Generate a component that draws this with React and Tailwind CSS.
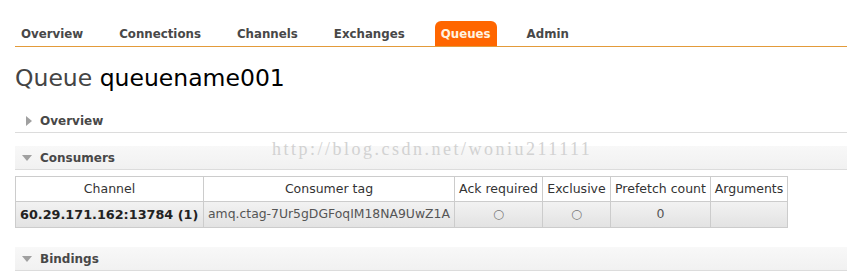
const tabs = ['Overview', 'Connections', 'Channels', 'Exchanges', 'Queues', 'Admin'];

const columns = [
  { label: 'Channel', width: 'w-[188px]' },
  { label: 'Consumer tag', width: 'w-[251px]' },
  { label: 'Ack required', width: 'w-[88px]' },
  { label: 'Exclusive', width: 'w-[68px]' },
  { label: 'Prefetch count', width: 'w-[100px]' },
  { label: 'Arguments', width: 'w-[77px]' },
];

function SectionHeader({ title, open, shaded }) {
  return (
    <div
      className={`flex items-center h-[24px] border-b border-[#dcdcdc] ${
        shaded ? 'bg-gradient-to-b from-[#f8f8f8] to-[#f1f1f1]' : ''
      }`}
    >
      <span className="w-[25px] flex justify-end pr-[8px]">
        {open ? (
          <span className="block w-0 h-0 border-l-[5px] border-r-[5px] border-t-[6px] border-l-transparent border-r-transparent border-t-[#a0a0a0]" />
        ) : (
          <span className="block w-0 h-0 border-t-[5px] border-b-[5px] border-l-[6px] border-t-transparent border-b-transparent border-l-[#a0a0a0]" />
        )}
      </span>
      <span className="font-bold text-[12px] text-[#484848]">{title}</span>
    </div>
  );
}

export default function App() {
  return (
    <div
      className="relative w-[847px] h-[274px] bg-white pl-[15px] overflow-hidden"
      style={{ fontFamily: '"DejaVu Sans", Verdana, sans-serif' }}
    >
      {/* Top menu */}
      <ul className="flex pt-[21px] border-b border-[#e39b3a]">
        {tabs.map((tab) => (
          <li
            key={tab}
            className={`h-[25px] flex items-center pt-[2px] px-[6px] mr-[24px] text-[11.8px] font-bold rounded-t-[6px] ${
              tab === 'Queues' ? 'bg-[#ff6600] text-[#fff3e0]' : 'text-[#484848]'
            }`}
          >
            {tab}
          </li>
        ))}
      </ul>

      {/* Title */}
      <h1 className="mt-[16px] text-[23.5px] leading-[30px] text-[#444]">
        Queue <span className="text-black">queuename001</span>
      </h1>

      <div className="mt-[16px]">
        <SectionHeader title="Overview" />
      </div>

      <div className="mt-[13px]">
        <SectionHeader title="Consumers" open shaded />
      </div>

      <table className="mt-[6px] border-collapse whitespace-nowrap text-[12.5px] text-[#333]">
        <thead>
          <tr className="h-[25px]">
            {columns.map((c) => (
              <th key={c.label} className={`${c.width} border border-[#cccccc] font-normal px-[3px] text-center`}>
                {c.label}
              </th>
            ))}
          </tr>
        </thead>
        <tbody>
          <tr className="h-[26px] bg-gradient-to-b from-[#f2f2f2] to-[#e2e2e2]">
            <td className="border border-[#cccccc] px-[4px] font-bold text-[12.8px] text-[#222]">60.29.171.162:13784 (1)</td>
            <td className="border border-[#cccccc] px-[4px] text-[12.4px] text-[#555]">amq.ctag-7Ur5gDGFoqIM18NA9UwZ1A</td>
            <td className="border border-[#cccccc] text-center text-[#777]">○</td>
            <td className="border border-[#cccccc] text-center text-[#777]">○</td>
            <td className="border border-[#cccccc] text-center text-[#555]">0</td>
            <td className="border border-[#cccccc]"></td>
          </tr>
        </tbody>
      </table>

      <div className="mt-[19px]">
        <SectionHeader title="Bindings" open shaded />
      </div>

      {/* Watermark */}
      <div
        className="absolute left-[272px] top-[136px] text-[18px] tracking-[2.5px] text-[#d2d2d2] pointer-events-none"
        style={{ fontFamily: '"Liberation Serif", serif' }}
      >
        http://blog.csdn.net/woniu211111
      </div>
    </div>
  );
}
